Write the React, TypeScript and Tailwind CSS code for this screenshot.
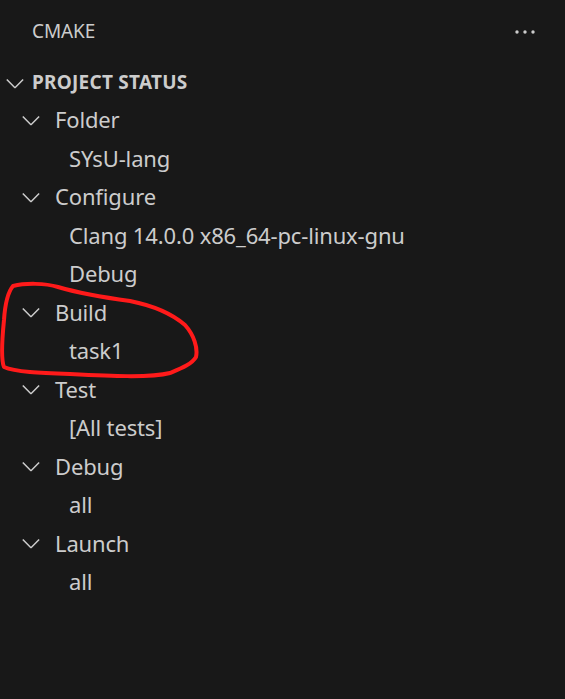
import React from "react";

const Chevron = () => (
  <svg width="28" height="28" viewBox="0 0 16 16" fill="#cccccc" className="shrink-0">
    <path d="M7.976 10.072l4.357-4.357.62.618L8.284 11h-.618L3 6.333l.619-.618 4.357 4.357z" />
  </svg>
);

type Group = { label: string; items: string[] };

const groups: Group[] = [
  { label: "Folder", items: ["SYsU-lang"] },
  { label: "Configure", items: ["Clang 14.0.0 x86_64-pc-linux-gnu", "Debug"] },
  { label: "Build", items: ["task1"] },
  { label: "Test", items: ["[All tests]"] },
  { label: "Debug", items: ["all"] },
  { label: "Launch", items: ["all"] },
];

export default function App() {
  return (
    <div
      className="relative w-[565px] h-[699px] bg-[#181818] text-[#cccccc] overflow-hidden"
      style={{ fontFamily: '"Noto Sans", "Open Sans", sans-serif' }}
    >
      <div className="flex items-center justify-between h-[62px] pl-[32px] pr-[30px] pt-[1px]">
        <span className="text-[19px] tracking-[-0.1px]">CMAKE</span>
        <svg width="20" height="6" viewBox="0 0 20 6" fill="#cccccc">
          <circle cx="2" cy="3" r="1.7" />
          <circle cx="10" cy="3" r="1.7" />
          <circle cx="18" cy="3" r="1.7" />
        </svg>
      </div>
      <div className="flex items-center h-[38px] pl-[1px] pt-[3px]">
        <Chevron />
        <span className="ml-[3px] text-[19px] font-bold tracking-[0.25px]">PROJECT STATUS</span>
      </div>
      <div className="flex flex-col">
        {groups.map((g, i) => (
          <div key={i} className="flex flex-col">
            <div className="flex items-center h-[38.5px] pl-[17px] pt-[1px]">
              <Chevron />
              <span className="ml-[10px] text-[22px] tracking-[-0.15px]">{g.label}</span>
            </div>
            {g.items.map((it, j) => (
              <div key={j} className="flex items-center h-[38.5px] pl-[69px] pt-[1px]">
                <span className="text-[22px] tracking-[-0.15px]">{it}</span>
              </div>
            ))}
          </div>
        ))}
      </div>
      <svg
        className="absolute inset-0 pointer-events-none"
        width="565"
        height="699"
        viewBox="0 0 565 699"
      >
        <path
          d="M13 286 C 25 283, 45 283, 58 287 C 75 292, 100 297, 130 301 C 150 305, 170 312, 185 325 C 194 335, 198 348, 196 357 C 192 364, 182 368, 170 373 C 150 378, 110 376, 70 374 C 40 373, 15 372, 4 367 C 1 360, 2 340, 4 320 C 5 305, 8 292, 13 286 Z"
          fill="none"
          stroke="#ff1a1a"
          strokeWidth="4"
          strokeLinejoin="round"
        />
      </svg>
    </div>
  );
}
